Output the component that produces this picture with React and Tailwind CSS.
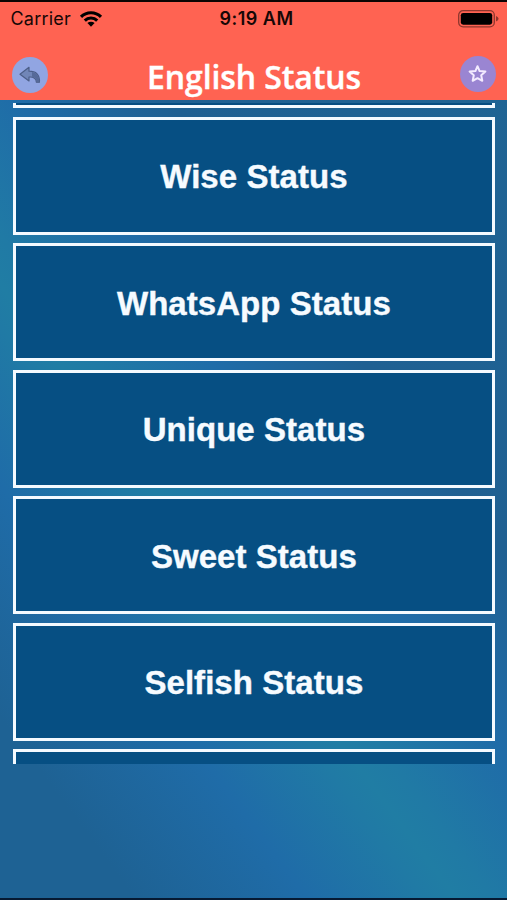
const items = ["Wise Status", "WhatsApp Status", "Unique Status", "Sweet Status", "Selfish Status"];

function Wifi() {
  return (
    <svg width="24" height="18" viewBox="0 0 24 18" className="block">
      <path d="M0.9 5.8A15.8 15.8 0 0 1 23.1 5.8L20.9 8A12.7 12.7 0 0 0 3.1 8Z" />
      <path d="M4.7 9.5A10.3 10.3 0 0 1 19.3 9.5L17.1 11.7A7.3 7.3 0 0 0 6.9 11.7Z" />
      <path d="M8.4 13.1A5.2 5.2 0 0 1 15.6 13.1L12 16.7Z" />
    </svg>
  );
}

function Battery() {
  return (
    <svg width="42" height="18" viewBox="0 0 42 18" className="block">
      <rect x="0.7" y="0.7" width="35.6" height="16.2" rx="4.4" fill="none" stroke="#000" strokeOpacity="0.45" strokeWidth="1.3" />
      <rect x="2.8" y="2.9" width="31.4" height="11.8" rx="2.4" />
      <path d="M38 6Q40.6 7 40.6 8.8Q40.6 10.6 38 11.6Z" fillOpacity="0.45" />
    </svg>
  );
}

export default function App() {
  return (
    <div className="flex h-[900px] w-[507px] flex-col overflow-hidden border-b-2 border-[#061a33] bg-[linear-gradient(53.4deg,#1e6294_108px,#1f6ca8_246px,#207aa5_340px,#207da4_366px,#207aa5_396px,#1f6ca8_490px,#1f6092_610px,#1f6494_900px)] font-['Inter',sans-serif]">
      <header className="flex h-[99.5px] shrink-0 flex-col border-t-2 border-[#0c0403] bg-[#ff6352]">
        <div className="grid h-[33px] grid-cols-3 items-center text-[18px] text-[#160706]">
          <div className="flex items-center gap-[8.5px] pl-[10.5px]">
            <span className="tracking-[0.2px]">Carrier</span>
            <Wifi />
          </div>
          <span className="pl-[6px] text-center text-[18px] font-semibold tracking-[0.5px]">9:19 AM</span>
          <div className="flex justify-end pr-[7px]">
            <Battery />
          </div>
        </div>
        <div className="flex items-start justify-between pl-3 pr-[11px] pt-[19px]">
          <button className="mt-[3px] flex size-9 items-center justify-center rounded-full bg-[#91a5e2]">
            <svg width="22" height="18" viewBox="0 0 22 18" fill="#7186b8" stroke="#4c5e88" strokeWidth="1.2" strokeLinejoin="round">
              <path d="M1 8.3L10 1.3V5.2C17 5.2 21 8.5 20.4 16.2H17.4C17.2 12.2 14.5 10.8 10 11V15Z" />
              <path d="M13 6C17.6 6.8 20.4 10 20.4 16.2H17.6C17.4 12.6 16 11.2 13 10.8Z" fill="#566a99" stroke="none" />
            </svg>
          </button>
          <h1 className="h-9 whitespace-nowrap pt-[5px] font-['Open_Sans',sans-serif] text-[32px] font-semibold leading-[36px] tracking-[-0.1px] text-white [-webkit-text-stroke:0.4px_white]">English Status</h1>
          <button className="mt-[1.5px] flex size-9 items-center justify-center rounded-full bg-[#9a85d2]">
            <svg width="20" height="20" viewBox="0 0 20 20" fill="none" stroke="#f3ebff" strokeWidth="2" strokeLinejoin="round">
              <path d="M9.5 2.2L11.6 7.1L17.4 7.6L13.2 11.2L14.3 16.8L9.5 14.2L4.7 16.8L5.8 11.2L1.6 7.6L7.4 7.1Z" />
            </svg>
          </button>
        </div>
      </header>
      <main className="mt-[3px] flex h-[661px] shrink-0 flex-col overflow-hidden pl-[13.3px] pr-[12.5px]">
        <div className="h-[5.7px] shrink-0 border-[3px] border-t-0 border-[#f4faff] bg-[#064d81]" />
        <ul className="flex flex-col gap-[8.4px] pt-[8.8px]">
          {items.map((t) => (
            <li key={t} className="flex h-[118px] shrink-0 items-center justify-center border-[3px] border-[#f4faff] bg-[#064f83] pt-[2px] font-['Liberation_Sans',Arial,sans-serif] text-[33px] font-bold leading-none tracking-[0.05px] text-[#f6fbff] [-webkit-text-stroke:0.4px_#f6fbff]">
              {t}
            </li>
          ))}
          <li className="h-[118px] shrink-0 border-[3px] border-[#f4faff] bg-[#064f83]" />
        </ul>
      </main>
    </div>
  );
}
